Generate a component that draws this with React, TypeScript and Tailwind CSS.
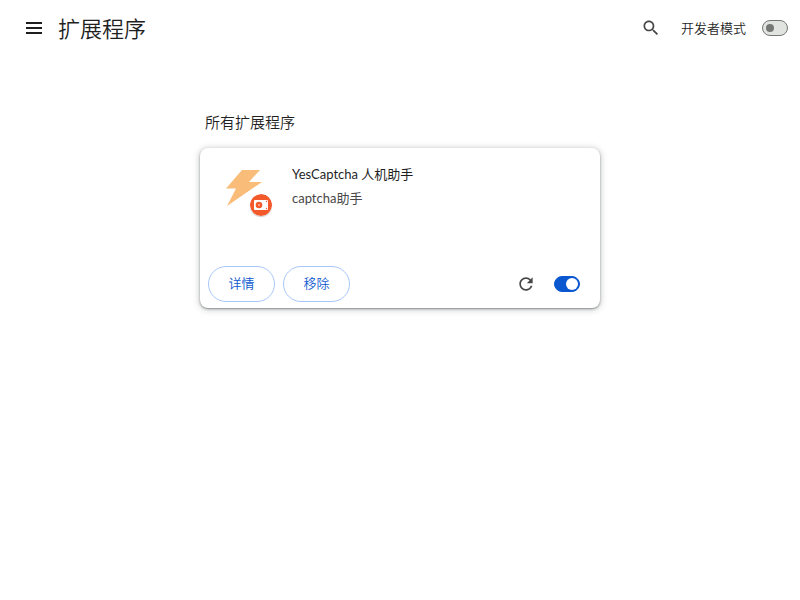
import React, { useState } from "react";

function Toggle({ id, label, defaultChecked = false }: { id: string; label?: string; defaultChecked?: boolean }) {
  const [on, setOn] = useState(defaultChecked);
  return (
    <input
      id={id}
      type="checkbox"
      role="switch"
      aria-label={label}
      checked={on}
      onChange={(e) => setOn(e.target.checked)}
      className="flex h-4 w-[26px] shrink-0 cursor-pointer appearance-none items-center rounded-full border border-[#747775] bg-[#e1e3e1] px-[3px] before:size-2 before:rounded-full before:bg-[#747775] checked:justify-end checked:border-[#0b57d0] checked:bg-[#0b57d0] checked:px-px checked:before:size-3 checked:before:bg-white"
    />
  );
}

function BoltLogo() {
  return (
    <svg viewBox="0 0 48 48" className="size-12" aria-hidden="true">
      <path d="M18 2H36L25 14H38L3 38L12 20.500H2Z" fill="#f9bc79" />
    </svg>
  );
}

function UnpackedBadge() {
  return (
    <svg viewBox="0 0 22 22" className="size-[22px] rounded-full shadow-[0_1px_1px_rgba(0,0,0,0.2)]" aria-hidden="true">
      <circle cx="11" cy="11" r="11" fill="#f4592b" />
      <rect x="4" y="6" width="14" height="10" rx="1" fill="#fff" />
      <circle cx="9" cy="11" r="3.300" fill="#f4592b" />
      <circle cx="9" cy="11" r="1" fill="#f9b09a" />
      <circle cx="16.500" cy="7.500" r="0.700" fill="#f4592b" />
      <circle cx="16.500" cy="14.500" r="0.700" fill="#f4592b" />
    </svg>
  );
}

function ExtensionCard() {
  const button = "h-9 w-[67px] cursor-pointer rounded-full border border-[#a8c7fa] text-[13px] text-[#0b57d0]";
  return (
    <article className="flex h-40 w-full flex-col justify-between rounded-lg bg-white shadow-[0_1px_2px_rgba(60,64,67,0.5),0_1px_6px_1px_rgba(60,64,67,0.25)]">
      <div className="flex gap-5 pt-4 pl-6">
        <div className="relative h-[52px] w-12 pt-1">
          <BoltLogo />
          <span className="absolute top-[30px] left-[26px]">
            <UnpackedBadge />
          </span>
        </div>
        <div className="text-[13px] leading-5 font-normal">
          <h3 className="text-[#1f1f1f]">YesCaptcha 人机助手</h3>
          <p className="mt-1 text-[#474747]">captcha助手</p>
        </div>
      </div>
      <div className="flex items-center gap-2 pr-5 pb-[6px] pl-2">
        <button className={button}>详情</button>
        <button className={button}>移除</button>
        <button aria-label="重新加载" className="mr-2 ml-auto flex size-6 cursor-pointer items-center justify-center">
          <svg viewBox="0 0 24 24" className="size-5" fill="#474747" aria-hidden="true">
            <path d="M17.650 6.350C16.200 4.900 14.210 4 12 4c-4.420 0-7.990 3.580-7.990 8s3.570 8 7.990 8c3.730 0 6.840-2.550 7.730-6h-2.080c-.820 2.330-3.040 4-5.650 4-3.310 0-6-2.690-6-6s2.690-6 6-6c1.660 0 3.140.690 4.220 1.780L13 11h7V4l-2.350 2.350z" />
          </svg>
        </button>
        <Toggle id="enable-extension" label="YesCaptcha 人机助手" defaultChecked />
      </div>
    </article>
  );
}

export default function App() {
  return (
    <div className="min-h-screen bg-white font-[Lato,'Noto_Sans_CJK_SC',sans-serif] font-[350] text-[#1f1f1f]">
      <header className="flex h-14 items-center pr-3 pl-[26px]">
        <button aria-label="主菜单" className="mr-4 cursor-pointer">
          <svg viewBox="0 0 16 12" className="h-3 w-4" fill="#1f1f1f" aria-hidden="true">
            <path d="M0 0h16v2H0zM0 5h16v2H0zM0 10h16v2H0z" />
          </svg>
        </button>
        <h1 className="pt-px text-[22px] leading-8 font-[350]">扩展程序</h1>
        <button aria-label="搜索" className="mr-5 ml-auto cursor-pointer">
          <svg viewBox="0 0 24 24" className="size-5" fill="#474747" aria-hidden="true">
            <path d="M15.500 14h-.790l-.280-.270C15.410 12.590 16 11.110 16 9.500 16 5.910 13.090 3 9.500 3S3 5.910 3 9.500 5.910 16 9.500 16c1.610 0 3.090-.590 4.230-1.570l.270.280v.790l5 4.990L20.490 19l-4.990-5zm-6 0C7.010 14 5 11.990 5 9.500S7.010 5 9.500 5 14 7.010 14 9.500 11.990 14 9.500 14z" />
          </svg>
        </button>
        <label htmlFor="developer-mode" className="mr-4 text-[13px] leading-5">
          开发者模式
        </label>
        <Toggle id="developer-mode" />
      </header>
      <main className="mx-auto max-w-[400px] pt-14">
        <h2 className="mb-4 pl-[5px] text-[15px] leading-5 font-[350]">所有扩展程序</h2>
        <ExtensionCard />
      </main>
    </div>
  );
}
